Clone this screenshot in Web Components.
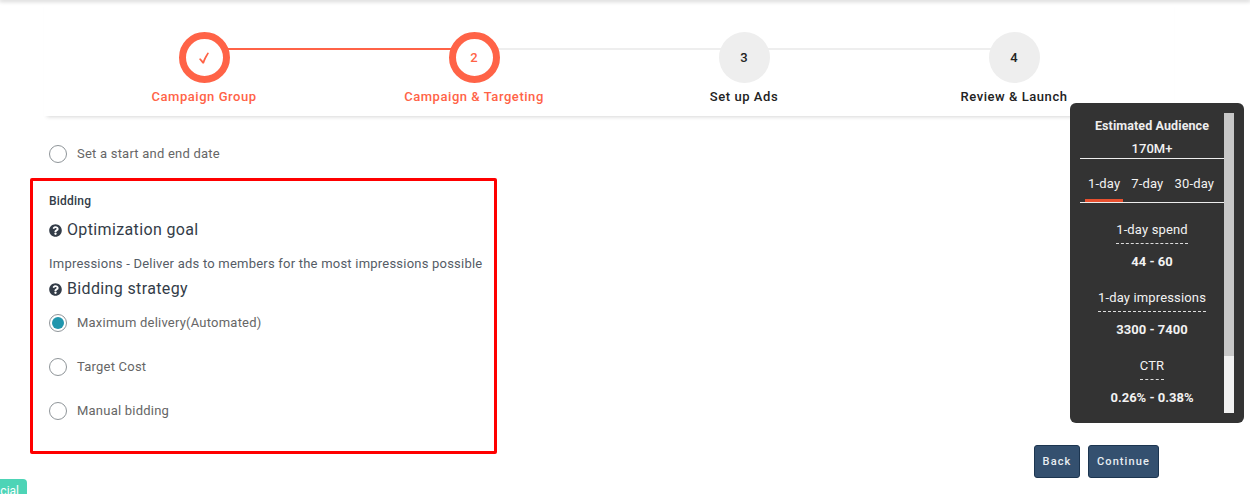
<!DOCTYPE html>
<html><head><meta charset="utf-8"><style>
html,body{margin:0;padding:0;height:494px;overflow:hidden;background:#fff;font-family:Roboto,sans-serif}
</style></head><body>
<app-page>
  <step-bar>
    <step-item state="done" label="Campaign Group" line="on"></step-item>
    <step-item state="active" label="Campaign &amp; Targeting" mark="2" line="off"></step-item>
    <step-item label="Set up Ads" mark="3" line="off"></step-item>
    <step-item label="Review &amp; Launch" mark="4"></step-item>
  </step-bar>
  <radio-row style="margin-top:28px">Set a start and end date</radio-row>
  <bid-box>
    <div class="title">Bidding</div>
    <help-head>Optimization goal</help-head>
    <div class="desc">Impressions - Deliver ads to members for the most impressions possible</div>
    <help-head class="second">Bidding strategy</help-head>
    <radio-row checked>Maximum delivery(Automated)</radio-row>
    <radio-row>Target Cost</radio-row>
    <radio-row>Manual bidding</radio-row>
  </bid-box>
  <audience-panel></audience-panel>
  <action-buttons></action-buttons>
  <social-tab></social-tab>
</app-page>
<script>
const def=(n,html)=>customElements.define(n,class extends HTMLElement{constructor(){super();this.attachShadow({mode:'open'}).innerHTML=html}});
def('app-page',`<style>:host{display:block;position:relative;width:1250px;height:494px;overflow:hidden;color:#555}
.top{height:0;box-shadow:0 0 4px 1px rgba(0,0,0,.3)}</style><div class="top"></div><slot></slot>`);
def('step-bar',`<style>:host{display:grid;grid-template-columns:repeat(4,270px);margin-left:44px;width:1130px;height:116px;box-sizing:border-box;padding:32px 0 0 25px;box-shadow:0 4px 4px -3px rgba(0,0,0,.16)}</style><slot></slot>`);
const CHECK='<svg width="12" height="12" viewBox="0 0 12 12" style="margin-top:-1px"><path fill="#ff6347" d="M1 7 2.300 6.200 5 9C6 6 8 3 9.500.5L11 1C9 4.500 7 8 6 11.500H4.500Z"/></svg>';
customElements.define('step-item',class extends HTMLElement{constructor(){super();
 const s=this.getAttribute('state')||'',l=this.getAttribute('line');
 const c=s?'#ff6347':'#222';
 this.attachShadow({mode:'open'}).innerHTML=`<style>
 :host{display:flex;flex-direction:column;align-items:center;position:relative;font:500 13px/16px Roboto,sans-serif;letter-spacing:.55px;color:${c}}
 .line{position:absolute;left:135px;width:270px;top:16px;height:2px;background:${l==='on'?'#ff6347':'#eee'}}
 .c{position:relative;width:51px;height:51px;box-sizing:border-box;border-radius:50%;display:flex;align-items:center;justify-content:center;padding-top:1px;background:${s?'#fff':'#eee'};${s?'border:7px solid #ff6347;':''}font-size:13px;letter-spacing:0;color:${c}}
 .t{margin-top:6px;white-space:nowrap}</style>${l?'<div class="line"></div>':''}<div class="c">${s==='done'?CHECK:this.getAttribute('mark')}</div><div class="t">${this.getAttribute('label')}</div>`}});
customElements.define('radio-row',class extends HTMLElement{constructor(){super();
 const on=this.hasAttribute('checked');
 this.attachShadow({mode:'open'}).innerHTML=`<style>
 :host{display:flex;align-items:center;margin-left:49px;height:20px;font:400 13px/20px Roboto,sans-serif;letter-spacing:.22px;color:#666}
 .r{width:18px;height:18px;box-sizing:border-box;border:1px solid #8f9599;border-radius:50%;margin-right:10px;display:flex;align-items:center;justify-content:center}
 .d{width:12px;height:12px;border-radius:50%;background:#2196ad}</style><span class="r">${on?'<span class="d"></span>':''}</span><slot></slot>`}});
def('help-head',`<style>:host{display:flex;align-items:center;height:22px;font:400 16px/22px Roboto,sans-serif;letter-spacing:.36px;color:#333c48}
svg{width:13px;height:13px;margin-right:5px}</style><svg viewBox="0 0 512 512"><path fill="#333c48" d="M504 256c0 137-111 248-248 248S8 393 8 256 119 8 256 8s248 111 248 248zM262.700 90c-54.500 0-89.300 23-116.600 63.800-3.500 5.300-2.400 12.400 2.700 16.300l34.700 26.300c5.200 3.900 12.600 3 16.700-2.100 17.900-22.700 30.100-35.800 57.300-35.800 20.400 0 45.700 13.100 45.700 33 0 15-12.400 22.700-32.600 34-23.600 13.200-54.800 29.700-54.800 70.900V302c0 6.600 5.400 12 12 12h56c6.600 0 12-5.400 12-12v-1.300c0-28.600 83.500-29.800 83.500-107.200C378.300 135.200 317.900 90 262.700 90zM256 339c-25.500 0-46.200 20.700-46.200 46.200 0 25.500 20.700 46.200 46.200 46.200s46.200-20.700 46.200-46.200c0-25.500-20.700-46.200-46.200-46.200z"/></svg><slot></slot>`);
def('bid-box',`<style>:host{display:block;box-sizing:border-box;width:467px;height:276px;margin:14px 0 0 30px;border:3px solid #f00;border-radius:2px;padding:13px 0 0 16px}
::slotted(.title){font:500 12px/14px Roboto,sans-serif;letter-spacing:.22px;color:#333c48;margin-bottom:11px}
::slotted(.desc){font:400 13px/18px Roboto,sans-serif;letter-spacing:.22px;color:#555c66;margin:14px 0 5px}
::slotted(help-head.second){margin-bottom:13px}
::slotted(radio-row){margin-left:0;margin-bottom:24px}</style><slot></slot>`);
def('audience-panel',`<style>
 :host{position:absolute;left:1070px;top:103px;width:174px;height:320px;box-sizing:border-box;background:#333;border-radius:6px;padding:10px;display:flex;color:#f2f2f2;text-align:center;font:400 13px/16px Roboto,sans-serif}
 .m{width:144px;flex:none}
 .h{font-weight:700;font-size:12.5px;letter-spacing:.1px;line-height:16px;margin-top:5px;color:#eee}
 .n{margin-top:7px;font-weight:500;line-height:16px;padding-bottom:2px;border-bottom:1px solid #eee;height:15px}
 .tabs{display:flex;height:44px;border-bottom:1px solid #eee;position:relative;align-items:center;padding:7px 0 0 8px;gap:11px;box-sizing:border-box;letter-spacing:.17px}
 .tabs u{position:absolute;left:5px;bottom:0;width:38px;height:3px;background:#e8502f}
 .tabs span{white-space:nowrap}
 .b{margin-top:20px}.tabs + .b{margin-top:19px}
 .l{display:inline-block;letter-spacing:.15px;padding-bottom:5px;border-bottom:1px dashed #ddd;height:16px}
 .v{font-weight:700;margin-top:10px}
 .sb{width:10px;flex:none;background:#f1f1f1}.sb i{display:block;height:243px;background:#c8c8c8}
 </style><div class="m"><div class="h">Estimated Audience</div><div class="n">170M+</div>
 <div class="tabs"><span>1-day</span><span>7-day</span><span>30-day</span><u></u></div>
 <div class="b"><span class="l">1-day spend</span><div class="v">44 - 60</div></div>
 <div class="b"><span class="l">1-day impressions</span><div class="v">3300 - 7400</div></div>
 <div class="b"><span class="l">CTR</span><div class="v">0.26% - 0.38%</div></div>
 </div><div class="sb"><i></i></div>`);
def('action-buttons',`<style>:host{position:absolute;left:1034px;top:445px;display:flex;gap:8px}
button{height:33px;box-sizing:border-box;background:#34506f;border:1px solid #1c3550;border-radius:3px;font:500 11px/1 Roboto,sans-serif;letter-spacing:1.1px;padding:0;color:#e8edf2}
.a{width:46px}.b{width:71px}</style><button class="a">Back</button><button class="b">Continue</button>`);
def('social-tab',`<style>:host{position:absolute;left:0;top:479px;width:27px;height:15px;overflow:hidden;background:#4dd4b6;border-radius:0 4px 0 0;color:#fff;font:400 12px/24px Roboto,sans-serif;text-align:right;padding-right:8px;box-sizing:border-box}span{white-space:nowrap}</style><span>cial</span>`);
</script>
</body></html>
